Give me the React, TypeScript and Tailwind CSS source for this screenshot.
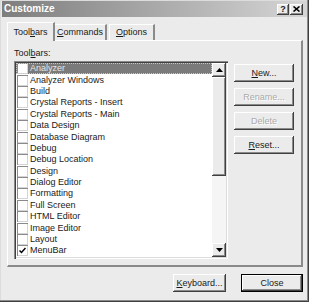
import { ReactNode } from 'react';

const raised = 'shadow-[inset_-1px_-1px_#404040,inset_1px_1px_#ffffff,inset_-2px_-2px_#8a8a8a]';
const listSunken = 'shadow-[inset_1px_1px_#8a8a8a,inset_2px_2px_#404040,inset_-1px_-1px_#ffffff,inset_-2px_-2px_#dcdcdc]';
const boxSunken = 'shadow-[inset_1px_1px_#8a8a8a,inset_-1px_-1px_#d4d4d4]';

const toolbars = [
  'Analyzer',
  'Analyzer Windows',
  'Build',
  'Crystal Reports - Insert',
  'Crystal Reports - Main',
  'Data Design',
  'Database Diagram',
  'Debug',
  'Debug Location',
  'Design',
  'Dialog Editor',
  'Formatting',
  'Full Screen',
  'HTML Editor',
  'Image Editor',
  'Layout',
  'MenuBar',
];

function Mn({ children }: { children: ReactNode }) {
  return <span className="underline underline-offset-[1px]">{children}</span>;
}

function Btn({ children, disabled, className = '' }: { children: ReactNode; disabled?: boolean; className?: string }) {
  return (
    <div
      className={`flex items-center justify-center bg-[#ebebeb] ${raised} ${
        disabled ? 'text-[#aaaaaa] [text-shadow:1px_1px_#ffffff]' : 'text-[#1a1a1a]'
      } ${className}`}
    >
      {children}
    </div>
  );
}

function Arrow({ down }: { down?: boolean }) {
  return (
    <div className={`w-[14px] h-[14px] bg-[#ebebeb] flex items-center justify-center ${raised}`}>
      <svg width="7" height="4" viewBox="0 0 7 4">
        <path d={down ? 'M0 0h7L3.5 4z' : 'M0 4h7L3.5 0z'} fill="#000" />
      </svg>
    </div>
  );
}

export default function App() {
  return (
    <div
      className="w-[309px] h-[302px] bg-[#ebebeb] flex flex-col text-[9px] leading-none text-[#1a1a1a] overflow-hidden shadow-[inset_-1px_-1px_#404040,inset_-2px_-2px_#8a8a8a,inset_1px_1px_#dcdcdc]"
      style={{ fontFamily: '"Liberation Sans", Arial, sans-serif' }}
    >
      {/* title bar */}
      <div className="mx-[2px] mt-[1px] h-[16px] flex items-center justify-between bg-gradient-to-r from-[#7e7e7e] to-[#d6d6d6] pl-[2px] pr-[4px]">
        <span className="text-white font-bold text-[10px]">Customize</span>
        <div className="flex gap-[1px]">
          <div className={`w-[12px] h-[11px] bg-[#ebebeb] flex items-center justify-center text-[9px] font-bold ${raised}`}>?</div>
          <div className={`w-[13px] h-[11px] bg-[#ebebeb] flex items-center justify-center ${raised}`}>
            <svg width="7" height="6" viewBox="0 0 7 6">
              <path d="M0.5 0.5l6 5M6.5 0.5l-6 5" stroke="#000" strokeWidth="1.6" />
            </svg>
          </div>
        </div>
      </div>

      <div className="pl-[7px] pr-[6px] flex flex-col">
        {/* tabs */}
        <div className="mt-[5px] h-[18px] flex items-end relative z-10">
          <div className="h-[19px] w-[48px] -mb-[1px] flex items-center justify-center bg-[#ebebeb] border-l border-t border-white border-r-2 border-r-[#8a8a8a]">
            Tool<Mn>b</Mn>ars
          </div>
          <div className="h-[16px] w-[52px] flex items-center justify-center border-t border-white border-r-2 border-r-[#8a8a8a]">
            <Mn>C</Mn>ommands
          </div>
          <div className="h-[16px] w-[46px] ml-[2px] flex items-center justify-center border-l border-t border-white border-r-2 border-r-[#8a8a8a]">
            <Mn>O</Mn>ptions
          </div>
        </div>

        {/* panel */}
        <div className="h-[227px] border-l border-t border-white border-r-2 border-b-2 border-r-[#8a8a8a] border-b-[#8a8a8a] pl-[6px] pt-[6px]">
          <div className="h-[12px] flex items-center">
            Tool<Mn>b</Mn>ars:
          </div>
          <div className="mt-[2px] flex items-start">
            <div className={`w-[214px] h-[198px] bg-white p-[2px] flex ${listSunken}`}>
              <div className="flex-1 flex flex-col">
                {toolbars.map((t, i) => (
                  <div
                    key={t}
                    className={`h-[11.4px] flex items-center ${
                      i === 0 ? 'bg-[#7a7a7a] text-[#e6e6e6] outline-1 outline-dotted outline-[#c8c8c8] -outline-offset-1' : ''
                    }`}
                  >
                    <div className={`ml-[1px] w-[11px] h-[11px] bg-white flex items-center justify-center ${boxSunken}`}>
                      {t === 'MenuBar' && (
                        <svg width="7" height="7" viewBox="0 0 7 7">
                          <path d="M0.5 3.5l2 2l4-4.5" stroke="#000" strokeWidth="1.5" fill="none" />
                        </svg>
                      )}
                    </div>
                    <span className="ml-[2px]">{t}</span>
                  </div>
                ))}
              </div>
              <div className="w-[14px] flex flex-col">
                <Arrow />
                <div className={`h-[99px] bg-[#ebebeb] ${raised}`} />
                <div className="flex-1 bg-[#f5f5f5]" />
                <Arrow down />
              </div>
            </div>

            <div className="ml-[6px] pt-[3px] flex flex-col gap-[6px]">
              <Btn className="w-[60px] h-[18px]">
                <Mn>N</Mn>ew...
              </Btn>
              <Btn disabled className="w-[60px] h-[18px]">
                Rename...
              </Btn>
              <Btn disabled className="w-[60px] h-[18px]">
                Delete
              </Btn>
              <Btn className="w-[60px] h-[18px]">
                <Mn>R</Mn>eset...
              </Btn>
            </div>
          </div>
        </div>

        {/* bottom buttons */}
        <div className="mt-[7px] flex justify-end gap-[15px]">
          <Btn className="w-[53px] h-[18px]">
            <Mn>K</Mn>eyboard...
          </Btn>
          <div className="w-[62px] h-[18px] border border-black">
            <Btn className="w-full h-full">Close</Btn>
          </div>
        </div>
      </div>
    </div>
  );
}
